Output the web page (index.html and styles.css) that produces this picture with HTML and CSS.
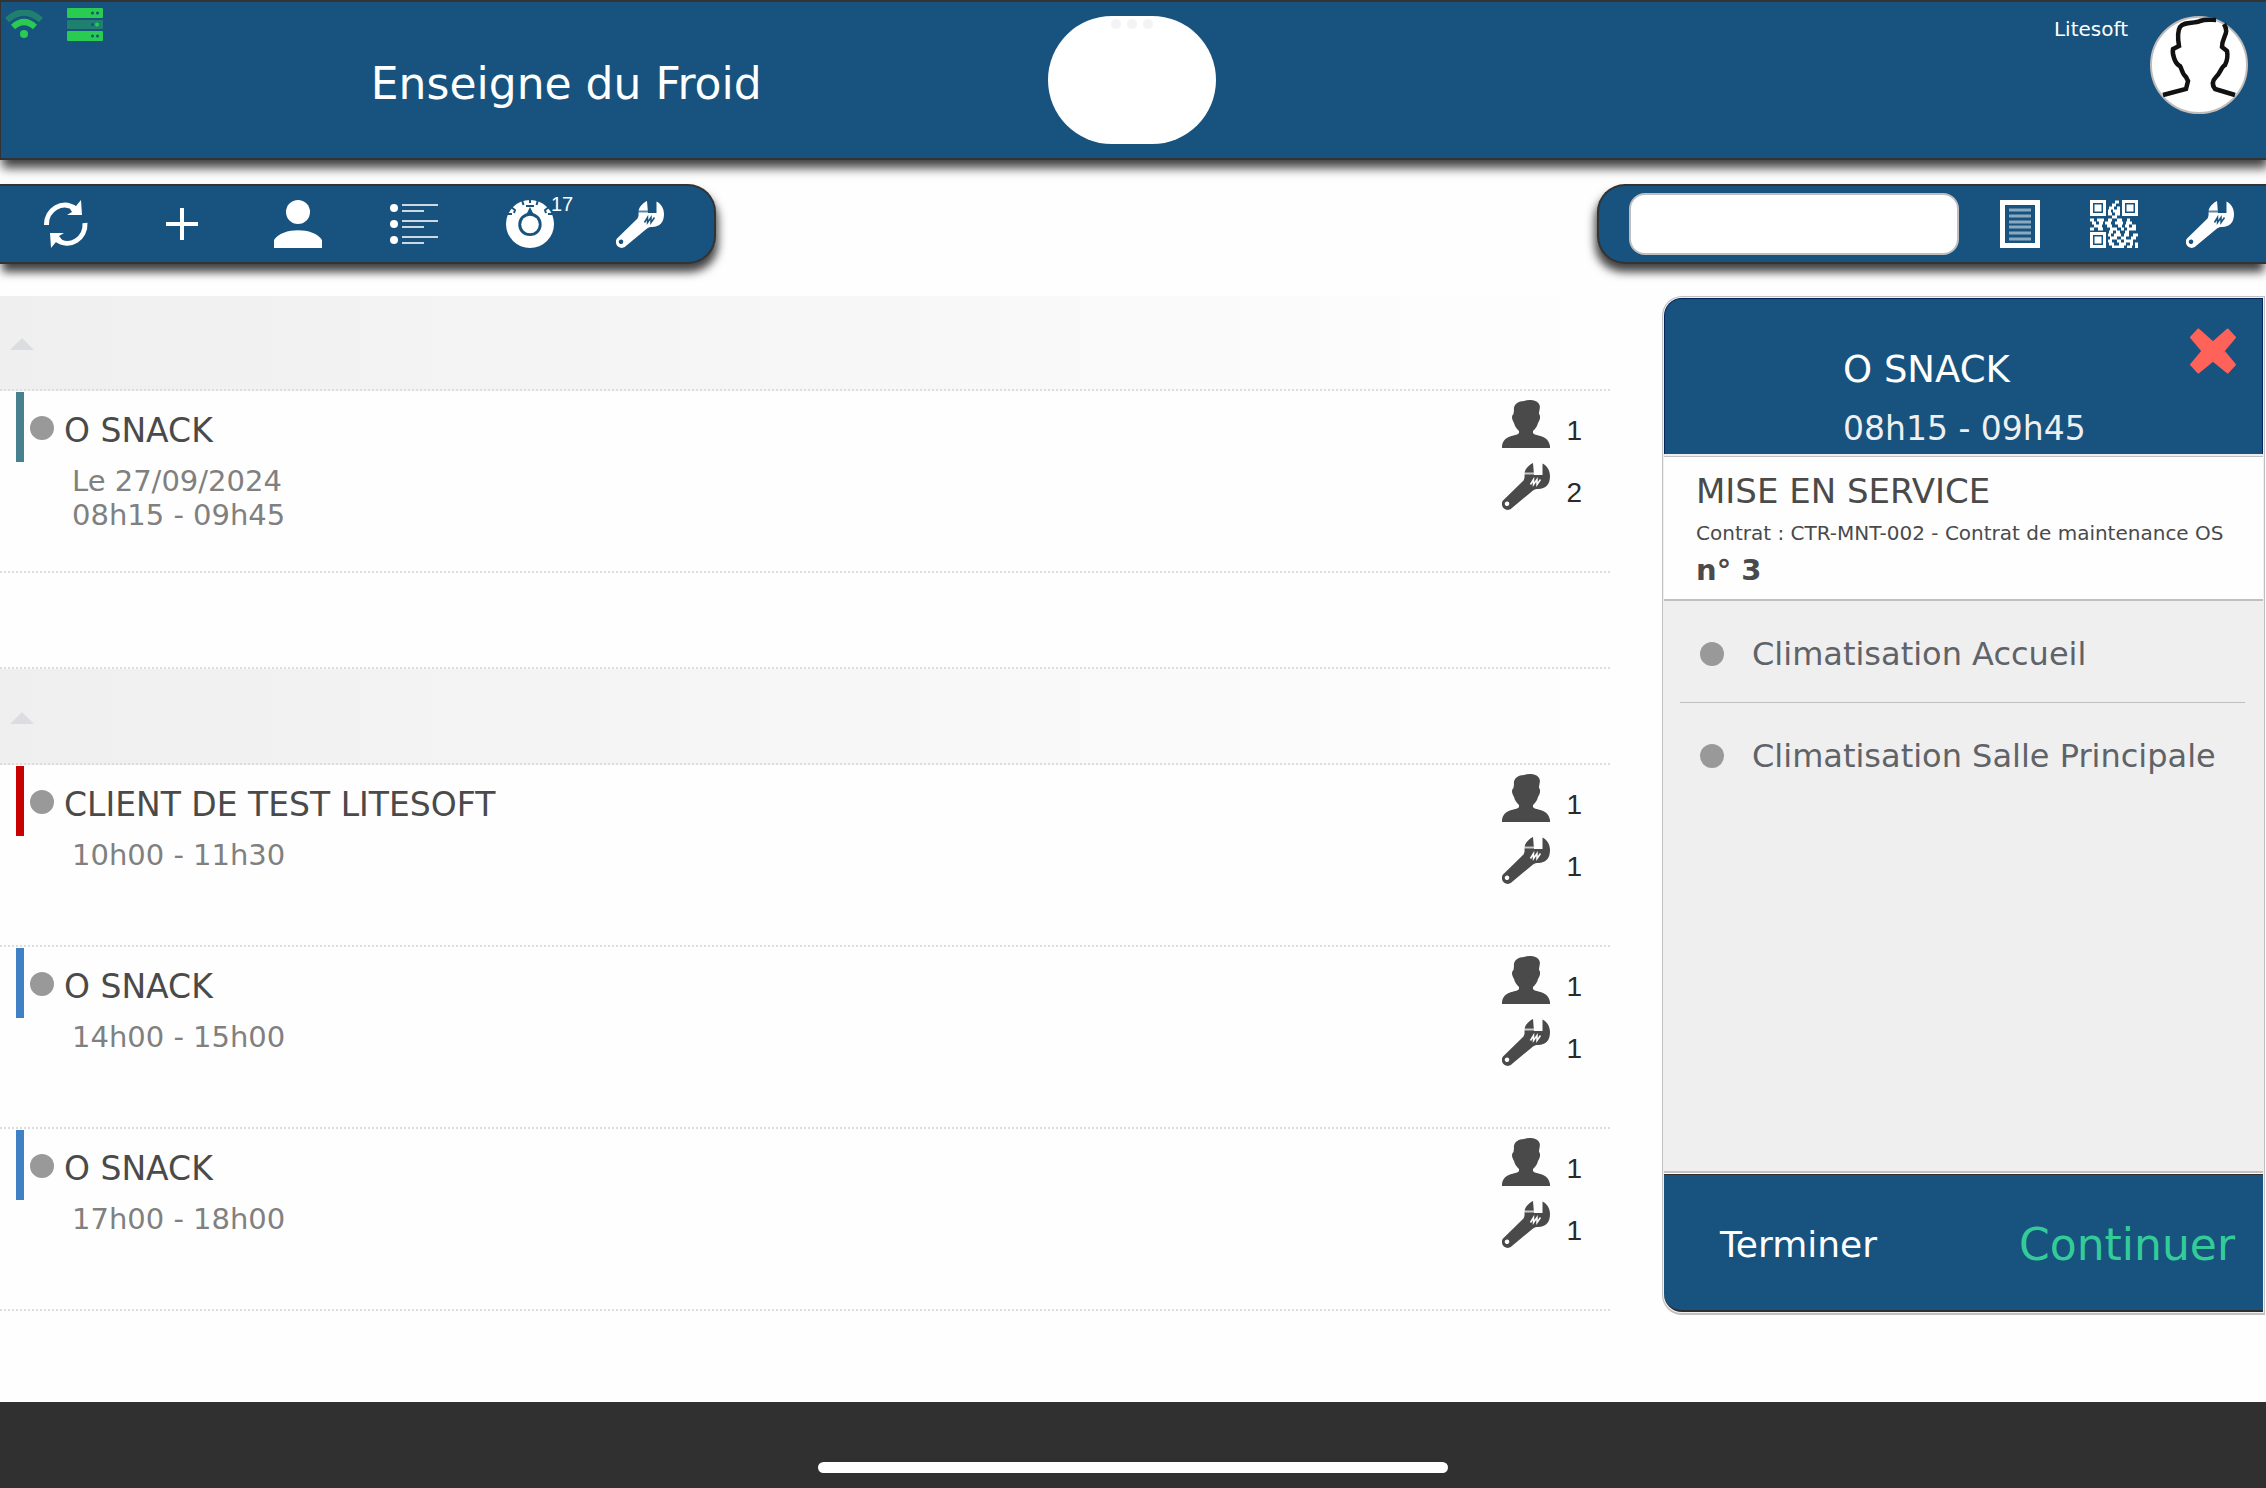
FILE: index.html
```html
<!DOCTYPE html>
<html lang="fr">
<head>
<meta charset="utf-8">
<meta name="viewport" content="width=device-width, initial-scale=1">
<title>Enseigne du Froid</title>
<link rel="stylesheet" href="styles.css">
</head>
<body>
<svg class="sprite" aria-hidden="true">
  <symbol id="wrench" viewBox="0 0 48 48">
    <path fill="currentColor" fill-rule="evenodd" d="M31 1L32 13H40.500V1.500C45.500 4 48 9 48 14C48 22 44 27 36 27C34 27 33 27 31 28.500L10.500 45.500A5.700 5.700 0 0 1 1 38.500L21.500 18.500C23 16 22.500 14 22.500 11.500C23 6.500 27 3 31 1ZM5.500 39.500A2.300 2.300 0 1 0 5.500 44A2.300 2.300 0 0 0 5.500 39.500Z"/>
    <path class="icon-band" d="M22 11.500H32"/>
    <path class="icon-cut" d="M28.500 22.500L31.500 17.500V22.500L35 17.500V22.500L38.500 17.500"/>
  </symbol>
  <symbol id="worker" viewBox="0 0 48 48">
    <path fill="currentColor" d="M12 10C11 5 16 1 22 1C27-1 35 0 37 4C39 7 37 10 37 14C39 16 38 20 36 23C35 27 33 29 31 31V33C34 37 46 34 48 46V48H0V46C2 34 14 37 17 33V31C15 29 13 27 12 23C10 20 9 16 11.500 14Z"/>
  </symbol>
</svg>

<header class="banner">
  <div class="banner-left">
    <div class="status">
      <svg class="status-wifi" viewBox="0 0 38 30" role="img" aria-label="Wi-Fi">
        <path d="M2 10Q19-5 36 10" fill="none" stroke="#1f806f" stroke-width="6"/>
        <path d="M8 17Q19 7 30 17" fill="none" stroke="#29cb51" stroke-width="6"/>
        <circle cx="19" cy="24" r="4" fill="#29cb51"/>
      </svg>
      <svg class="status-server" viewBox="0 0 36 34" role="img" aria-label="Serveur">
        <rect y="0" width="36" height="10" rx="1" fill="#29cb51"/>
        <rect y="12" width="36" height="9" rx="1" fill="#1f806f"/>
        <rect y="23" width="36" height="10" rx="1" fill="#29cb51"/>
        <g fill="#17537e"><circle cx="25.500" cy="5" r="1.500"/><circle cx="30.500" cy="5" r="1.500"/><circle cx="25.500" cy="16.500" r="1.500"/><circle cx="25.500" cy="28" r="1.500"/><circle cx="30.500" cy="28" r="1.500"/></g>
        <circle cx="30" cy="16.500" r="2" fill="#29cb51"/>
      </svg>
    </div>
    <h1 class="banner-title">Enseigne du Froid</h1>
  </div>
  <div class="logo"><i class="logo-dot"></i><i class="logo-dot"></i><i class="logo-dot"></i></div>
  <div class="account">
    <span class="account-name">Litesoft</span>
    <svg class="avatar" viewBox="0 0 98 98" role="img" aria-label="Litesoft">
      <circle cx="49" cy="49" r="48" fill="#fff" stroke="#c0bcba" stroke-width="2"/>
      <path d="M13 79L36 73L38 65L36 61C32 58 32 53 30 50C25 48 22 38 23 33L29 30C28 24 27 16 30 11C34 5 44 8 50 5C56 3 61 4 66 4M74 8C80 18 72 20 72 31L77 35C78 40 77 45 75 49C71 51 70 58 66 61C62 65 62 69 65 73L85 79" fill="none" stroke="#111" stroke-width="4.500"/>
    </svg>
  </div>
</header>

<div class="toolbars">
  <nav class="toolbar toolbar-left" aria-label="Actions">
    <button class="tool" aria-label="Actualiser">
      <svg class="icon" viewBox="0 0 48 48"><g fill="none" stroke="#fff" stroke-width="5"><path d="M4.500 25C4 10 20-1 34 9"/><path d="M43 23C44 38 28 50 14 39"/></g><path fill="#fff" d="M39 0L40 15H25L30 12L27 7L34 6ZM9 48L8 33H22L17 36L21 41L14 42Z"/></svg>
    </button>
    <button class="tool" aria-label="Ajouter">
      <svg class="icon" viewBox="0 0 48 48"><path d="M24 8V40M8 24H40" stroke="#fff" stroke-width="4"/></svg>
    </button>
    <button class="tool" aria-label="Client">
      <svg class="icon" viewBox="0 0 48 48" fill="#fff"><circle cx="24" cy="12" r="12"/><path d="M0 48V40C8 27 40 27 48 40V48Z"/></svg>
    </button>
    <button class="tool" aria-label="Liste">
      <svg class="icon" viewBox="0 0 48 48"><g fill="#fff"><circle cx="4" cy="8" r="4"/><circle cx="4" cy="24" r="4"/><circle cx="4" cy="40" r="4"/></g><path d="M12 5H48M12 11H34M12 21H48M12 27H34M12 37H48M12 43H34" stroke="#cdd9e2" stroke-width="2"/></svg>
    </button>
    <button class="tool" aria-label="Pièces">
      <svg class="icon" viewBox="0 0 48 48"><circle cx="24" cy="24" r="24" fill="#fff"/><path d="M24 7L21 13C8 17 10 36 24 36C38 36 40 17 27 13Z" fill="#17537e"/><circle cx="24" cy="24.500" r="8.800" fill="#fff"/><path d="M16 0L17.500 5M32 0L30.500 5M24 0V3M5 7L9 10L8 13M43 7L39 10L40 13M1 14H6M47 14H42M20 6H28" fill="none" stroke="#17537e" stroke-width="2"/></svg>
      <span class="badge">17</span>
    </button>
    <button class="tool" aria-label="Outils"><svg class="icon"><use href="#wrench"/></svg></button>
  </nav>
  <div class="toolbar toolbar-right">
    <input class="search" type="search" aria-label="Rechercher">
    <button class="tool" aria-label="Document">
      <svg class="icon" viewBox="0 0 48 48"><rect x="6.500" y="2.500" width="35" height="43" fill="none" stroke="#fff" stroke-width="5"/><path d="M13 10H35M13 16H35M13 22H35M13 27H35M13 33H35M13 39H35" stroke="#8baabf" stroke-width="3"/></svg>
    </button>
    <button class="tool" aria-label="QR code">
      <svg class="icon" viewBox="0 0 48 48"><g fill="none" stroke="#fff" stroke-width="3"><path d="M1.500 1.500H14.500V14.500H1.500ZM33.500 1.500H46.500V14.500H33.500ZM1.500 33.500H14.500V46.500H1.500Z"/></g><g fill="#fff"><path d="M4.500 4.500H11.500V11.500H4.500ZM36.500 4.500H43.500V11.500H36.500ZM4.500 36.500H11.500V43.500H4.500Z"/></g><path d="M25 2h4M22 5h4M19 8h5M27 8h3M18 11h3M23 11h7M18 14h4M25 14h5M22 17h5M0 20h4M7 20h7M18 20h4M27 20h5M37 20h3M2 23h4M9 23h4M15 23h6M25 23h8M36 23h6M4 26h8M17 26h5M28 26h4M35 26h4M42 26h4M0 29h4M8 29h5M20 29h7M31 29h3M37 29h9M19 32h4M26 32h4M35 32h4M18 35h3M24 35h7M34 35h5M43 35h5M20 38h7M31 38h5M41 38h5M18 41h4M27 41h4M34 41h9M19 44h5M29 44h7M40 44h3M45 44h3M22 47h12M37 47h5M45 47h3" stroke="#fff" stroke-width="3"/></svg>
    </button>
    <button class="tool" aria-label="Outils"><svg class="icon"><use href="#wrench"/></svg></button>
  </div>
</div>

<main class="content">
  <div class="schedule">
    <section>
      <button class="group" aria-label="Replier"><i class="caret"></i></button>
      <ul class="jobs">
        <li class="job">
          <i class="job-bar teal"></i><i class="dot"></i>
          <div class="job-text"><h2 class="job-name">O SNACK</h2><p class="job-time">Le 27/09/2024<br>08h15 - 09h45</p></div>
          <div class="counts">
            <div class="count"><svg class="icon"><use href="#worker"/></svg><span>1</span></div>
            <div class="count"><svg class="icon"><use href="#wrench"/></svg><span>2</span></div>
          </div>
        </li>
      </ul>
      <div class="spacer"></div>
    </section>
    <section>
      <button class="group" aria-label="Replier"><i class="caret"></i></button>
      <ul class="jobs">
        <li class="job">
          <i class="job-bar red"></i><i class="dot"></i>
          <div class="job-text"><h2 class="job-name">CLIENT DE TEST LITESOFT</h2><p class="job-time">10h00 - 11h30</p></div>
          <div class="counts">
            <div class="count"><svg class="icon"><use href="#worker"/></svg><span>1</span></div>
            <div class="count"><svg class="icon"><use href="#wrench"/></svg><span>1</span></div>
          </div>
        </li>
        <li class="job">
          <i class="job-bar blue"></i><i class="dot"></i>
          <div class="job-text"><h2 class="job-name">O SNACK</h2><p class="job-time">14h00 - 15h00</p></div>
          <div class="counts">
            <div class="count"><svg class="icon"><use href="#worker"/></svg><span>1</span></div>
            <div class="count"><svg class="icon"><use href="#wrench"/></svg><span>1</span></div>
          </div>
        </li>
        <li class="job">
          <i class="job-bar blue"></i><i class="dot"></i>
          <div class="job-text"><h2 class="job-name">O SNACK</h2><p class="job-time">17h00 - 18h00</p></div>
          <div class="counts">
            <div class="count"><svg class="icon"><use href="#worker"/></svg><span>1</span></div>
            <div class="count"><svg class="icon"><use href="#wrench"/></svg><span>1</span></div>
          </div>
        </li>
      </ul>
    </section>
  </div>

  <aside class="panel">
    <header class="panel-head">
      <div>
        <h2 class="panel-title">O SNACK</h2>
        <p class="panel-time">08h15 - 09h45</p>
      </div>
      <button class="close" aria-label="Fermer">
        <svg class="close-icon" viewBox="0 0 44 44"><path d="M8 1.500L22 14L36 1.500L43 9L32 22L43 35L36 42.500L22 31L8 42.500L1 35L12 22L1 9Z" fill="#ff6259" stroke="#ff6259" stroke-width="2" stroke-linejoin="round"/></svg>
      </button>
    </header>
    <div class="panel-info">
      <h3 class="info-title">MISE EN SERVICE</h3>
      <p class="info-contract">Contrat : CTR-MNT-002 - Contrat de maintenance OS</p>
      <p class="info-number">n° 3</p>
    </div>
    <ul class="units">
      <li class="unit"><i class="dot"></i>Climatisation Accueil</li>
      <li class="unit"><i class="dot"></i>Climatisation Salle Principale</li>
    </ul>
    <footer class="panel-foot">
      <button class="finish">Terminer</button>
      <button class="continue">Continuer</button>
    </footer>
  </aside>
</main>

<footer class="home"><i class="home-bar"></i></footer>
</body>
</html>
```
FILE: styles.css
```css
* { box-sizing: border-box; }

body {
  margin: 0;
  min-height: 100vh;
  display: flex;
  flex-direction: column;
  background: #fefefe;
  color: #4a4a4a;
  font-family: Verdana, "DejaVu Sans", sans-serif;
}

h1, h2, h3, p, ul { margin: 0; padding: 0; font-weight: normal; }
ul { list-style: none; }
i { display: block; }
svg { display: block; }
button { padding: 0; border: 0; background: none; color: inherit; font: inherit; cursor: pointer; }

.sprite { position: absolute; width: 0; height: 0; }
.icon { width: 48px; height: 48px; flex: none; }
.icon-cut { fill: none; stroke: var(--cut); stroke-width: 1.5px; }
.icon-band { fill: none; stroke: var(--cut); stroke-width: 2px; opacity: .7; }

/* Banner */
.banner {
  display: grid;
  grid-template-columns: 1fr auto 1fr;
  align-items: start;
  height: 160px;
  padding-right: 4px;
  border: 2px solid #333;
  border-width: 2px 0 2px 1px;
  background: #17537e;
  box-shadow: 2px 8px 10px rgba(0, 0, 0, .75);
  color: #fff;
}
.banner-left { position: relative; height: 100%; padding: 54px 0 0 84px; text-align: center; }
.banner-title { font-size: 44px; line-height: 56px; }
.status { position: absolute; top: 6px; left: 4px; display: flex; gap: 24px; }
.status-wifi { width: 38px; height: 30px; margin-top: 2px; }
.status-server { width: 36px; height: 34px; }
.logo {
  display: flex;
  justify-content: center;
  gap: 6px;
  width: 168px;
  height: 128px;
  margin-top: 14px;
  padding-top: 3px;
  border-radius: 64px;
  background: #fff;
}
.logo-dot { width: 10px; height: 10px; border-radius: 50%; background: #f4f4f4; }
.account { display: flex; justify-content: flex-end; gap: 22px; padding: 14px 14px 0 0; }
.account-name { font-size: 20px; line-height: 26px; }
.avatar { width: 98px; height: 98px; }

/* Toolbars */
.toolbars { display: flex; justify-content: space-between; margin: 24px 0 32px; }
.toolbar {
  --cut: #17537e;
  display: flex;
  align-items: center;
  height: 80px;
  border: 2px solid #333;
  background: #17537e;
  box-shadow: 2px 8px 10px rgba(0, 0, 0, .75);
  color: #fff;
}
.toolbar-left { gap: 68px; padding: 0 50px 0 42px; border-left: 0; border-radius: 0 28px 28px 0; }
.toolbar-right { gap: 46px; padding: 0 32px 0 30px; border-right: 0; border-radius: 28px 0 0 28px; box-shadow: -2px 8px 10px rgba(0, 0, 0, .75); }
.tool { position: relative; }
.badge { position: absolute; top: -8px; left: 45px; font: 20px/24px "Liberation Sans", Arial, sans-serif; }
.tool:last-child { margin-left: -6px; }
.toolbar-right .tool:last-child { margin-left: 2px; }
.search { width: 330px; height: 62px; margin-right: -9px; padding: 0 16px; border: 2px solid #c0bebe; border-radius: 16px; background: #fff; font: inherit; font-size: 28px; }

/* Schedule */
.content { flex: 1; display: flex; gap: 52px; padding: 0 1px 87px 0; }
.schedule { flex: 1; }
.group {
  display: flex;
  align-items: flex-end;
  width: 100%;
  height: 96px;
  padding: 0 10px 39px;
  border-bottom: 2px dotted #ddd;
  background: linear-gradient(to right, #efefef, #fefefe);
}
section:first-child .group { height: 95px; }
.caret { border: 12px solid transparent; border-top: 0; border-bottom-color: #dcdde0; }
.job {
  --cut: #fefefe;
  display: flex;
  align-items: flex-start;
  min-height: 182px;
  padding: 0 28px 0 16px;
  border-bottom: 2px dotted #ddd;
}
.job-bar { width: 8px; height: 70px; margin: 1px 6px 0 0; }
.teal { background: #47808f; }
.red { background: #c80000; }
.blue { background: #3f81c4; }
.dot { flex: none; width: 24px; height: 24px; border-radius: 50%; background: #999; }
.job .dot { margin-top: 25px; }
.job-text { flex: 1; padding: 20px 0 0 10px; }
.job-name { font-size: 33px; line-height: 40px; }
.job-time { padding: 13px 0 0 8px; color: #808080; font-size: 29px; line-height: 34px; }
.counts { display: grid; gap: 14px; padding-top: 9px; }
.count { display: flex; align-items: flex-end; gap: 16px; font: 28px/34px "Liberation Sans", Arial, sans-serif; color: #4a4a4a; }
.count span { color: #2a2a2a; }
.spacer { height: 96px; border-bottom: 2px dotted #ddd; }

/* Detail panel */
.panel {
  display: flex;
  flex-direction: column;
  width: 603px;
  padding: 1px;
  border: 1px solid #c0c0c0;
  border-bottom-width: 2px;
  border-radius: 20px 0 0 20px;
  background: #efefef;
}
.panel-head {
  display: flex;
  justify-content: space-between;
  align-items: flex-start;
  height: 156px;
  padding: 47px 26px 0 178px;
  border: 1px solid #03245c;
  border-bottom: 0;
  border-radius: 18px 0 0 0;
  background: #17537e;
  color: #fff;
}
.panel-title { font-size: 37px; line-height: 48px; }
.panel-time { margin-top: 15px; color: #efefef; font-size: 33px; line-height: 40px; }
.close { margin-top: -18px; }
.close-icon { width: 46px; height: 46px; }
.panel-info { margin-top: 2px; padding: 14px 20px 11px 32px; border: 1px solid #c0c0c0; border-width: 1px 0 2px; background: #fefefe; }
.info-title { font-size: 34px; line-height: 40px; }
.info-contract { margin-top: 8px; font-size: 20px; line-height: 28px; white-space: nowrap; }
.info-number { margin-top: 5px; font-size: 29px; font-weight: bold; line-height: 36px; }
.units { flex: 1; padding: 0 18px 0 16px; }
.unit { display: flex; align-items: center; gap: 28px; height: 101px; padding: 5px 0 0 20px; color: #5f6368; font-size: 32px; }
.unit + .unit { border-top: 1px solid #c0c0c0; }
.panel-foot {
  display: flex;
  justify-content: space-between;
  align-items: center;
  height: 138px;
  padding: 4px 28px 0 56px;
  border: 1px solid #2e2e2e;
  border-width: 1px 0 2px;
  border-radius: 0 0 0 18px;
  background: #17537e;
  box-shadow: 0 -1px #fff, 0 -3px #c0c0c0;
}
.finish { color: #fff; font-size: 36px; }
.continue { color: #33cc99; font-size: 44px; }

/* Home indicator */
.home { display: flex; justify-content: center; height: 86px; padding-top: 60px; background: #303030; }
.home-bar { width: 630px; height: 11px; border-radius: 6px; background: #fff; }
```
